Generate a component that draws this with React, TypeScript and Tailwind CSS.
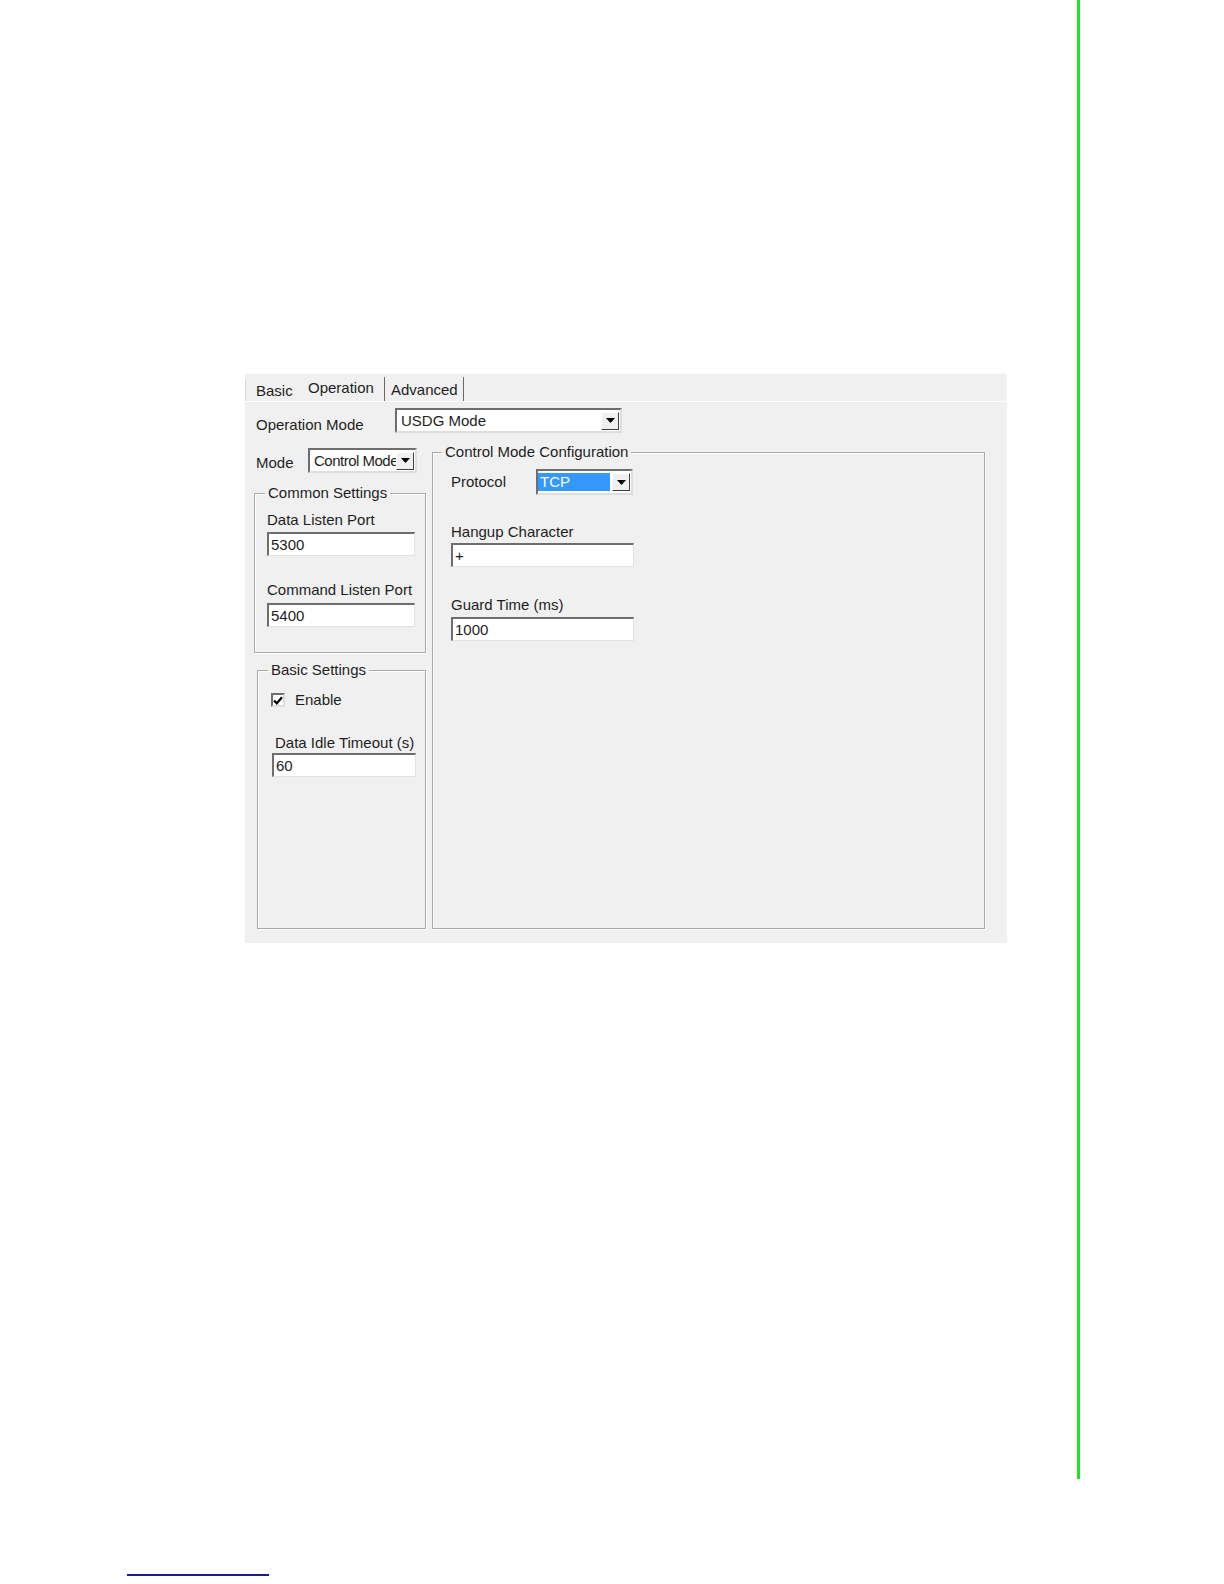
// dialog screenshot: "Operation" tab of the serial device server utility
const sunken =
  "border-2 border-t-[#6e6e6e] border-l-[#6e6e6e] border-r-[#dedede] border-b-[#dedede] bg-white";

function Arrow() {
  return (
    <svg width="9" height="5" viewBox="0 0 9 5">
      <polygon points="0,0 9,0 4.5,5" fill="#000" />
    </svg>
  );
}

function DropBtn() {
  return (
    <div className="mr-px flex h-[18px] w-[18px] shrink-0 items-center justify-center border border-t-white border-l-white border-r-[#404040] border-b-[#404040] bg-[#f0f0f0]">
      <Arrow />
    </div>
  );
}

function Combo({
  value,
  className,
  textClass = "",
}: {
  value: string;
  className: string;
  textClass?: string;
}) {
  return (
    <div className={`flex items-center ${sunken} ${className}`}>
      <span
        className={`flex-1 overflow-hidden whitespace-nowrap pl-[4px] leading-[18px] ${textClass}`}
      >
        {value}
      </span>
      <DropBtn />
    </div>
  );
}

function Field({ value, className }: { value: string; className: string }) {
  return (
    <div
      className={`h-[24px] border-t-2 border-l-2 border-r border-b border-t-[#6e6e6e] border-l-[#6e6e6e] border-r-[#e2e2e2] border-b-[#e2e2e2] bg-white pl-[2px] leading-[21px] ${className}`}
    >
      {value}
    </div>
  );
}

function Group({
  title,
  className,
  bodyClass,
  legendClass = "ml-[10px]",
  children,
}: {
  title: string;
  className: string;
  bodyClass: string;
  legendClass?: string;
  children: React.ReactNode;
}) {
  return (
    <fieldset
      className={`min-w-0 border border-[#aaaaaa] shadow-[1px_1px_0_#ffffff,inset_1px_1px_0_#ffffff] ${className}`}
    >
      <legend className={`px-[3px] leading-[18px] ${legendClass}`}>{title}</legend>
      <div className={bodyClass}>{children}</div>
    </fieldset>
  );
}

export default function App() {
  return (
    <div className="flex h-[1584px] w-[1224px] bg-white font-['Liberation_Sans',Arial,sans-serif] text-[15px] text-[#1e1e1e]">
      <div className="flex w-[1077px] flex-col">
        {/* dialog */}
        <div className="ml-[245px] mt-[374px] flex h-[569px] w-[762px] flex-col bg-[#f0f0f0]">
          {/* tabs */}
          <div className="flex h-[27px] items-end">
            <div className="h-[21px] w-[55px] border-l border-[#d6d6d6] pl-[10px] leading-[21px]">
              Basic
            </div>
            <div className="h-[26px] w-[84px] pl-[8px] leading-[26px]">Operation</div>
            <div className="h-[24px] w-[80px] border-x border-[#6a6a6a] pl-[6px] pt-[3px] leading-[20px]">
              Advanced
            </div>
          </div>
          <div className="h-px bg-white" />

          {/* content */}
          <div className="flex flex-1 flex-col pb-[14px] pl-[9px] pt-[6px]">
            <div className="flex h-[25px] items-center">
              <span className="ml-[2px] mt-[9px] w-[139px]">Operation Mode</span>
              <Combo value="USDG Mode" className="h-[25px] w-[227px]" />
            </div>

            <div className="flex flex-1">
              {/* left column */}
              <div className="flex w-[172px] flex-col pt-[15px]">
                <div className="flex h-[25px] items-center">
                  <span className="ml-[2px] mt-[6px] w-[52px]">Mode</span>
                  <Combo
                    value="Control Mode"
                    className="h-[25px] w-[109px]"
                    textClass="tracking-[-0.5px]"
                  />
                </div>

                <Group
                  title="Common Settings"
                  className="mt-[11px]"
                  bodyClass="pb-[25px] pl-[12px]"
                >
                  <div className="mt-[9px] leading-[18px]">Data Listen Port</div>
                  <Field value="5300" className="mt-[3px] w-[148px]" />
                  <div className="mt-[25px] leading-[18px]">Command Listen Port</div>
                  <Field value="5400" className="mt-[4px] w-[148px]" />
                </Group>

                <Group
                  title="Basic Settings"
                  className="ml-[3px] mt-[8px] flex-1"
                  bodyClass="pl-[13px]"
                >
                  <div className="mt-[12px] flex h-[18px] items-center">
                    <div className={`flex h-[14px] w-[14px] items-center justify-center ${sunken}`}>
                      <svg width="10" height="9" viewBox="0 0 10 9">
                        <path d="M1 4.5 L3.8 7.3 L9 1.2" stroke="#000" strokeWidth="2.2" fill="none" />
                      </svg>
                    </div>
                    <span className="ml-[10px] leading-[18px]">Enable</span>
                  </div>
                  <div className="ml-[4px] mt-[25px] leading-[18px]">Data Idle Timeout (s)</div>
                  <Field value="60" className="ml-px mt-px w-[144px]" />
                </Group>
              </div>

              {/* right group */}
              <Group
                title="Control Mode Configuration"
                className="ml-[6px] mt-[10px] w-[553px]"
                bodyClass="pl-[18px]"
                legendClass="ml-[9px]"
              >
                <div className="mt-[8px] flex h-[26px] items-center">
                  <span className="w-[85px]">Protocol</span>
                  <div className={`flex h-[26px] w-[97px] items-center ${sunken}`}>
                    <span className="mr-[2px] h-[18px] flex-1 bg-[#3399ff] pl-[2px] leading-[18px] text-white">
                      TCP
                    </span>
                    <DropBtn />
                  </div>
                </div>
                <div className="mt-[28px] leading-[18px]">Hangup Character</div>
                <Field value="+" className="mt-[2px] w-[183px]" />
                <div className="mt-[29px] leading-[18px]">Guard Time (ms)</div>
                <Field value="1000" className="mt-[3px] w-[183px]" />
              </Group>
            </div>
          </div>
        </div>

        <div className="mb-[8px] ml-[127px] mt-auto h-[2px] w-[142px] bg-[#1b1b8f]" />
      </div>
      <div className="h-[1479px] w-[3px] bg-[#1fe51f]" />
    </div>
  );
}
